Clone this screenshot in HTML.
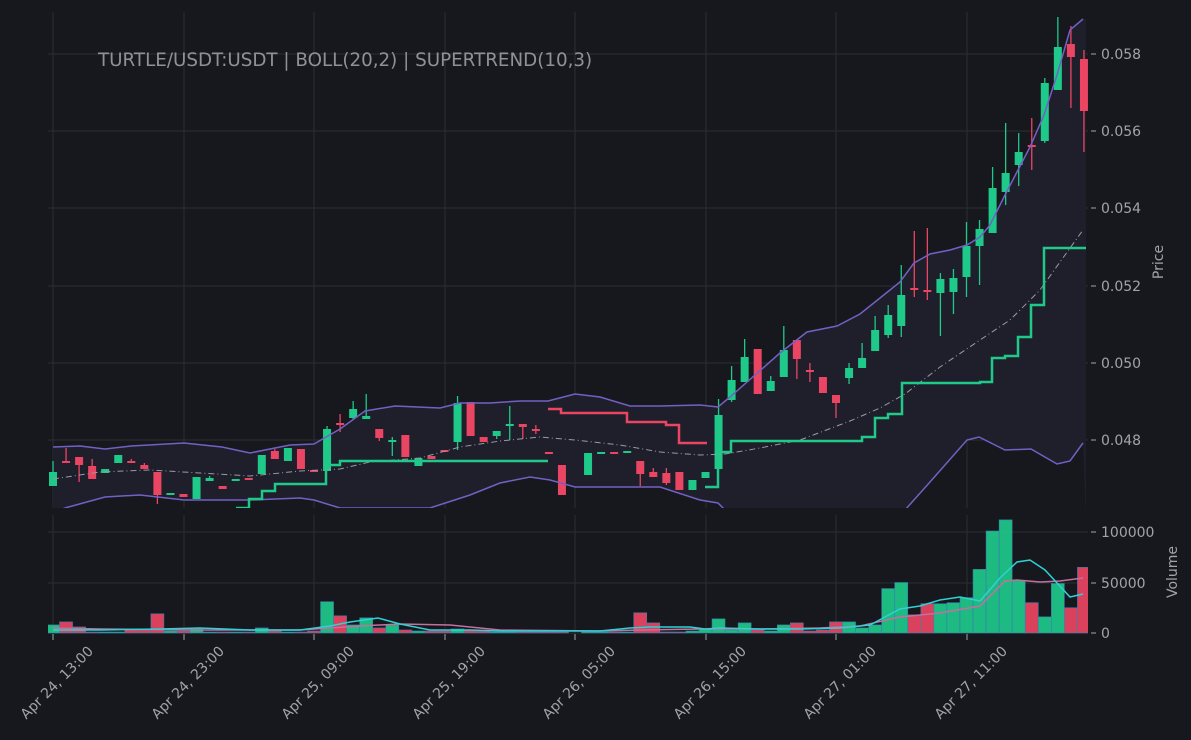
<!DOCTYPE html>
<html><head><meta charset="utf-8"><style>
html,body{margin:0;padding:0;background:#16181d;}
svg{display:block;font-family:"DejaVu Sans","Liberation Sans",sans-serif;}
</style></head><body>
<svg id="c" width="1191" height="740" viewBox="0 0 1191 740" xmlns="http://www.w3.org/2000/svg">
<rect width="1191" height="740" fill="#16181d"/>
<defs>
<clipPath id="pc"><rect x="48" y="12" width="1040" height="496"/></clipPath>
<clipPath id="vc"><rect x="48" y="515" width="1040" height="119"/></clipPath>
</defs>
<g id="grid" stroke="#2a2f31" stroke-width="1"></g>
<g clip-path="url(#pc)">
<path id="band" fill="#1e1f2b" stroke="none"/>
<g id="candles"></g>
<polyline id="up" fill="none" stroke="#7360c4" stroke-width="1.5"/>
<polyline id="lo" fill="none" stroke="#7360c4" stroke-width="1.5"/>
<polyline id="mid" fill="none" stroke="#9a9aa4" stroke-width="1" stroke-dasharray="6,3,1,3"/>
<polyline fill="none" stroke="#1ec98a" stroke-width="2.5" points="236,508 249,508 249,499 262,499 262,491 275,491 275,484 326,484 326,465 340,465 340,461 548,461"/>
<polyline fill="none" stroke="#ea4563" stroke-width="2.5" points="548,409 561,409 561,413 627,413 627,422 666,422 666,425 679,425 679,443 707,443"/>
<polyline fill="none" stroke="#1ec98a" stroke-width="2.5" points="705,487 718,487 718,452 731,452 731,441 862,441 862,437 875,437 875,418 888,418 888,414 902,414 902,383 980,383 980,382 992,382 992,358 1005,358 1005,356 1018,356 1018,337 1031,337 1031,305 1044,305 1044,248 1086,248"/>
</g>
<g clip-path="url(#vc)">
<g id="vol"></g>
<polyline fill="none" stroke="#c4709f" stroke-width="1.5" points="53,628 100,629 200,630 300,630 330,628 360,626 400,624 450,625 500,630 600,631 640,630 700,629 760,629 820,628 860,626 900,617 940,613 980,606 1005,581 1017,580 1040,582 1060,581 1083,578"/>
<polyline fill="none" stroke="#2ed1d6" stroke-width="1.5" points="53,630 100,630 160,629 200,628 250,630 300,630 330,626 350,622 378,618 400,624 430,630 470,630 500,631 600,631 630,628 650,627 690,627 705,629 720,628 760,629 800,629 840,628 870,625 900,609 920,606 940,600 960,597 980,601 1000,578 1017,562 1030,560 1045,570 1070,597 1083,594"/>
</g>
<text x="98" y="66" font-size="18.3" fill="#8e9297">TURTLE/USDT:USDT | BOLL(20,2) | SUPERTREND(10,3)</text>
<g font-size="14" fill="#a0a4a9">
<text x="1101" y="59">0.058</text>
<text x="1101" y="136">0.056</text>
<text x="1101" y="213">0.054</text>
<text x="1101" y="291">0.052</text>
<text x="1101" y="368">0.050</text>
<text x="1101" y="445">0.048</text>
<text x="1101" y="537">100000</text>
<text x="1101" y="588">50000</text>
<text x="1101" y="638">0</text>
<text transform="translate(1163,262) rotate(-90)" text-anchor="middle">Price</text>
<text transform="translate(1177,572) rotate(-90)" text-anchor="middle">Volume</text>
<text transform="translate(94,652) rotate(-45)" text-anchor="end">Apr 24, 13:00</text>
<text transform="translate(225,652) rotate(-45)" text-anchor="end">Apr 24, 23:00</text>
<text transform="translate(355,652) rotate(-45)" text-anchor="end">Apr 25, 09:00</text>
<text transform="translate(486,652) rotate(-45)" text-anchor="end">Apr 25, 19:00</text>
<text transform="translate(616,652) rotate(-45)" text-anchor="end">Apr 26, 05:00</text>
<text transform="translate(747,652) rotate(-45)" text-anchor="end">Apr 26, 15:00</text>
<text transform="translate(877,652) rotate(-45)" text-anchor="end">Apr 27, 01:00</text>
<text transform="translate(1008,652) rotate(-45)" text-anchor="end">Apr 27, 11:00</text>
</g>
<g id="ticks" stroke="#a0a4a9" stroke-width="1"></g>
</svg>
<script>
var NS="http://www.w3.org/2000/svg";
function el(p,t,a){var e=document.createElementNS(NS,t);for(var k in a)e.setAttribute(k,a[k]);p.appendChild(e);return e;}
var G="#1ec98a",R="#ea4563";
var grid=document.getElementById("grid"),ticks=document.getElementById("ticks");
[54,131,208,286,363,440].forEach(function(y){el(grid,"line",{x1:48,x2:1088,y1:y,y2:y});el(ticks,"line",{x1:1091,x2:1096,y1:y,y2:y});});
[532,583,633].forEach(function(y){el(grid,"line",{x1:48,x2:1088,y1:y,y2:y});el(ticks,"line",{x1:1091,x2:1096,y1:y,y2:y});});
[53,184,314,445,575,706,836,967].forEach(function(x){el(grid,"line",{x1:x,x2:x,y1:12,y2:508});el(grid,"line",{x1:x,x2:x,y1:515,y2:633});el(ticks,"line",{x1:x,x2:x,y1:634,y2:640});});
var C=[
[G,472,486,461,486],[R,461,463,448,463],[R,457,465,457,482],[R,466,479,459,479],[G,469,473,469,473],
[G,455,463,455,463],[R,461,463,459,463],[R,465,469,463,469],[R,472,495,472,504],[G,493,495,493,495],
[R,494,497,494,497],[G,477,499,477,499],[G,478,481,476,481],[R,486,489,486,489],[G,479,481,479,481],
[R,478,479,478,479],[G,455,474,455,474],[R,451,459,449,459],[G,448,461,448,461],[R,449,469,449,469],
[R,470,471,470,471],[G,429,471,426,471],[R,423,424,414,432],[G,409,418,401,420],[G,416,419,394,419],
[R,429,438,429,441],[G,440,441,437,456],[R,435,457,435,457],[G,458,466,458,466],[R,456,459,456,459],
[R,450,452,450,452],[G,403,442,396,450],[R,402,436,402,436],[R,437,442,437,442],[G,431,436,431,439],
[G,424,425,406,440],[R,424,427,424,439],[R,429,430,425,434],[R,452,453,452,453],[R,465,495,465,495],
null,[G,453,475,453,475],[G,452,454,452,454],[R,452,454,452,454],[G,451,452,451,452],
[R,461,474,461,486],[R,472,477,468,477],[R,473,483,468,485],[R,472,490,472,490],[G,480,490,480,490],
[G,472,478,472,478],[G,415,469,399,469],[G,380,400,366,402],[G,357,382,339,382],[R,349,394,349,394],
[G,381,391,376,391],[G,350,377,326,377],[R,340,359,340,379],[R,370,372,363,382],[R,377,393,377,393],
[R,395,403,395,418],[G,368,378,363,384],[G,358,368,343,368],[G,330,351,316,351],[G,315,335,305,338],
[G,295,326,265,337],[R,288,290,231,297],[R,290,292,228,300],[G,279,293,273,336],[G,278,292,269,314],
[G,246,277,222,297],[G,229,246,220,285],[G,188,233,167,233],[G,173,192,123,205],[G,152,165,133,186],
[R,145,146,118,170],[G,83,141,78,143],[G,47,90,17,90],[R,44,57,26,108],[R,59,111,50,152]];
var V=[8,11,6,1,1,1,4,3,19,2,2,4,1,1,1,1,5,2,1,1,2,31,17,8,15,5,8,3,2,2,2,4,3,2,1,1,1,1,1,1,0,1,1,1,1,20,10,1,1,2,4,14,3,10,3,2,8,10,2,3,11,11,5,8,44,50,18,29,29,30,35,63,101,112,52,30,16,49,25,65];
var cg=document.getElementById("candles"),vg=document.getElementById("vol");
for(var i=0;i<80;i++){var x=53+13.05*i,c=C[i];
 if(c){el(cg,"line",{x1:x,x2:x,y1:c[3],y2:c[4],stroke:c[0],"stroke-width":1.3});
  el(cg,"rect",{x:x-4,y:c[1],width:8,height:Math.max(2,c[2]-c[1]),fill:c[0]});}
 var h=V[i]*1.01;var col=c?c[0]:G;
 if(h>0)el(vg,"rect",{x:x-6.5,y:633-h,width:13,height:h,fill:col,stroke:"#3a7fb0","stroke-width":0.6,"fill-opacity":0.92});
}
var up=[[53,447],[80,446],[105,449],[131,446],[184,443],[222,447],[250,453],[290,445],[314,444],[340,429],[365,411],[395,406],[440,408],[460,403],[490,403],[520,401],[548,401],[575,394],[600,397],[630,406],[660,406],[700,405],[718,407],[730,397],[747,382],[780,353],[807,332],[837,326],[860,314],[880,298],[900,282],[914,263],[930,254],[950,250],[967,245],[980,237],[990,225],[1005,195],[1018,170],[1030,147],[1044,115],[1057,75],[1070,30],[1083,19]];
var lo=[[53,512],[65,508],[105,497],[140,495],[184,500],[250,500],[300,498],[314,500],[340,508],[430,508],[470,495],[500,483],[530,477],[550,480],[575,487],[620,487],[660,487],[700,500],[718,503],[730,515],[800,530],[880,525],[905,510],[930,482],[967,440],[979,437],[1005,450],[1031,449],[1057,464],[1070,461],[1083,443]];
var mid=[[53,479],[100,472],[150,470],[200,473],[250,476],[300,471],[340,469],[370,462],[420,458],[460,447],[500,441],[540,437],[575,440],[620,445],[660,452],[700,455],[725,454],[760,448],[800,440],[850,421],[880,408],[905,394],[940,367],[980,340],[1010,320],[1040,290],[1060,262],[1083,230]];
function pts(a){return a.map(function(p){return p[0]+","+p[1];}).join(" ");}
document.getElementById("up").setAttribute("points",pts(up));
document.getElementById("lo").setAttribute("points",pts(lo));
document.getElementById("mid").setAttribute("points",pts(mid));
var lb=lo.slice().reverse();
document.getElementById("band").setAttribute("d","M"+pts(up).replace(/ /g," L")+" L1086,19 L1086,520 L"+pts(lb).replace(/ /g," L")+" Z");
</script>
</body></html>
